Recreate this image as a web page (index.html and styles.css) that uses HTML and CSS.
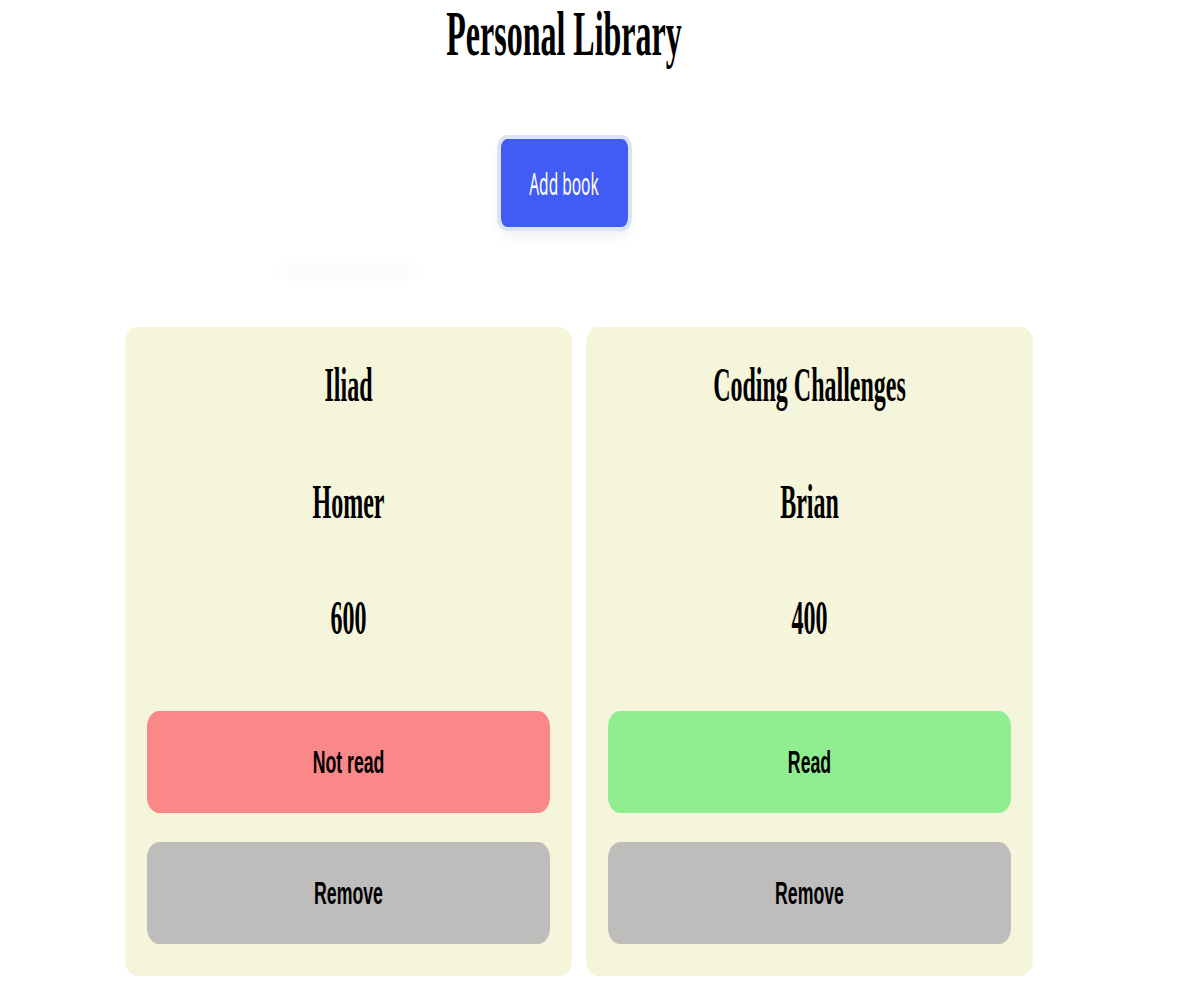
FILE: index.html
```html
<!DOCTYPE html>
<html lang="en">
<head>
<meta charset="utf-8">
<title>Personal Library</title>
<link rel="stylesheet" href="styles.css">
</head>
<body>
  <header class="header">
    <h1 class="title"><span class="tall">Personal Library</span></h1>
    <button class="add-btn"><span class="tall-sans">Add book</span></button>
  </header>
  <div class="form-shadow"></div>
  <main class="library">
    <article class="card">
      <p class="field"><span class="tall">Iliad</span></p>
      <p class="field"><span class="tall">Homer</span></p>
      <p class="field"><span class="tall">600</span></p>
      <button class="card-btn not-read"><span class="tall-btn">Not read</span></button>
      <button class="card-btn remove"><span class="tall-btn">Remove</span></button>
    </article>
    <article class="card">
      <p class="field"><span class="tall">Coding Challenges</span></p>
      <p class="field"><span class="tall">Brian</span></p>
      <p class="field"><span class="tall">400</span></p>
      <button class="card-btn read"><span class="tall-btn">Read</span></button>
      <button class="card-btn remove"><span class="tall-btn">Remove</span></button>
    </article>
  </main>
</body>
</html>
```

FILE: styles.css
```css
html, body {
  margin: 0;
  padding: 0;
  background: #ffffff;
}

body {
  font-family: "Liberation Serif", "Times New Roman", serif;
  color: #000;
}

.header {
  width: 1128px;
  display: flex;
  flex-direction: column;
  align-items: center;
  padding-top: 1px;
}

.title {
  margin: 0;
  font-size: 32px;
  font-weight: bold;
  line-height: 64px;
  height: 64px;
}

.tall {
  display: inline-block;
  transform: scaleY(2);
  transform-origin: 50% 50%;
}

.add-btn {
  margin-top: 74px;
  width: 127px;
  height: 88px;
  border: none;
  border-radius: 6px / 9px;
  background: #405cf5;
  color: #ffffff;
  font-family: "Noto Sans", "Open Sans", sans-serif;
  font-size: 15.5px;
  line-height: 16px;
  padding: 0;
  box-shadow: 0 0 0 4px #dde4f1, 0 8px 14px rgba(0, 0, 0, 0.07);
  display: flex;
  align-items: center;
  justify-content: center;
}

.tall-sans {
  display: inline-block;
  transform: scaleY(2);
  transform-origin: 50% 50%;
}

.form-shadow {
  margin: 40px 0 0 280px;
  width: 134px;
  height: 1px;
  box-shadow: 0 4px 12px 2px rgba(0, 0, 0, 0.05);
}

.library {
  display: flex;
  gap: 14px;
  padding-left: 125px;
  margin-top: 59px;
}

.card {
  width: 447px;
  box-sizing: border-box;
  background: #f5f5dc;
  border-radius: 12px / 16px;
  padding: 46px 22px 32px;
  display: flex;
  flex-direction: column;
  align-items: stretch;
}

.field {
  margin: 0 0 92.5px;
  font-size: 24px;
  font-weight: bold;
  line-height: 24px;
  height: 24px;
  text-align: center;
}

.field:nth-of-type(3) {
  margin-bottom: 81px;
}

.card-btn {
  height: 102px;
  border: none;
  border-radius: 12px / 16px;
  font-family: "Liberation Sans", Arial, sans-serif;
  font-size: 17.7px;
  font-weight: bold;
  line-height: 18px;
  color: #000;
  padding: 0;
  display: flex;
  align-items: center;
  justify-content: center;
}

.card-btn + .card-btn {
  margin-top: 29px;
}

.tall-btn {
  display: inline-block;
  transform: scaleY(1.8);
  transform-origin: 50% 50%;
}

.not-read {
  background: #fa8888;
}

.read {
  background: #90ee90;
}

.remove {
  background: #bfbcbc;
}
```
